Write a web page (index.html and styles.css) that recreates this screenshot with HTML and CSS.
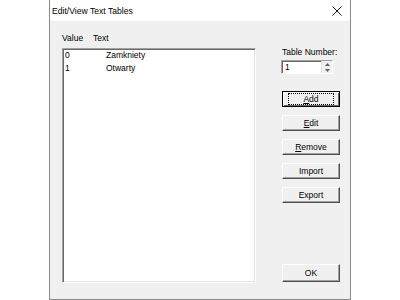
FILE: index.html
```html
<!DOCTYPE html>
<html>
<head>
    <title>Edit/View Text Tables</title>
    <link rel="stylesheet" href="styles.css">
</head>
<body>
    <div class="dialog">
        <div class="titlebar">
            <span class="title">Edit/View Text Tables</span>
            <svg class="close" width="10" height="10" viewBox="0 0 10 10">
                <path d="M0.5 0.5 L9.5 9.5 M9.5 0.5 L0.5 9.5" stroke="#1a1a1a" stroke-width="1" fill="none"/>
            </svg>
        </div>

        <div class="content">
            <div class="list-column">
                <div class="list-header">
                    <span class="col-value">Value</span>
                    <span class="col-text">Text</span>
                </div>
                <div class="listbox">
                    <div class="row"><span class="cell-value">0</span><span class="cell-text">Zamkniety</span></div>
                    <div class="row"><span class="cell-value">1</span><span class="cell-text">Otwarty</span></div>
                </div>
            </div>

            <div class="side-column">
                <label class="side-label">Table Number:</label>
                <div class="spinbox">
                    <span class="spin-value">1</span>
                    <div class="spin-arrows">
                        <svg width="5" height="3" viewBox="0 0 5 3"><path d="M0 3 L2.5 0 L5 3 Z" fill="#606060"/></svg>
                        <svg width="5" height="3" viewBox="0 0 5 3"><path d="M0 0 L2.5 3 L5 0 Z" fill="#606060"/></svg>
                    </div>
                </div>

                <button class="btn btn-default first"><span class="focus"><u>A</u>dd</span></button>
                <button class="btn"><u>E</u>dit</button>
                <button class="btn"><u>R</u>emove</button>
                <button class="btn">Import</button>
                <button class="btn">Export</button>

                <button class="btn btn-ok">OK</button>
            </div>
        </div>
    </div>
</body>
</html>
```

FILE: styles.css
```css
body {
    margin: 0;
    padding: 0;
    background-color: #fff;
    font-family: "Liberation Sans", Arial, sans-serif;
    font-size: 8.5px;
    color: #000;
}

.dialog {
    margin-left: 49px;
    width: 300px;
    height: 299px;
    border: 1px solid #8a8a8a;
    border-top: none;
    background-color: #f0f0f0;
    display: flex;
    flex-direction: column;
}

.titlebar {
    height: 21px;
    background-color: #fff;
    display: flex;
    align-items: center;
    justify-content: space-between;
    padding: 0 8px 0 2px;
}

.title {
    font-size: 8.6px;
    color: #000;
}

.close {
    margin-top: 1px;
}

.content {
    display: flex;
    flex: 1;
    padding: 11px 0 0 12px;
}

.list-column {
    width: 194px;
}

.list-header {
    height: 13px;
    line-height: 13px;
    margin-bottom: 3px;
    display: flex;
}

.col-value {
    width: 31px;
}

.listbox {
    height: 233px;
    background-color: #fff;
    border-top: 1px solid #a0a0a0;
    border-left: 1px solid #a0a0a0;
    border-right: 1px solid #fff;
    border-bottom: 1px solid #fff;
    box-shadow: inset 1px 1px 0 #696969, inset -1px -1px 0 #e3e3e3;
    padding: 0 0 0 2px;
}

.row {
    display: flex;
    height: 13px;
    line-height: 13px;
}

.cell-value {
    width: 41px;
}

.side-column {
    margin-left: 25px;
    width: 60px;
    display: flex;
    flex-direction: column;
    padding-top: 14px;
}

.side-label {
    height: 12px;
    line-height: 12px;
    padding-left: 1px;
}

.spinbox {
    margin-top: 2px;
    width: 52px;
    height: 14px;
    box-sizing: border-box;
    background-color: #fff;
    border-top: 1px solid #a0a0a0;
    border-left: 1px solid #a0a0a0;
    border-right: 1px solid #fff;
    border-bottom: 1px solid #fff;
    box-shadow: inset 1px 1px 0 #696969;
    display: flex;
    align-items: center;
    justify-content: space-between;
}

.spin-value {
    padding-left: 3px;
    line-height: 12px;
}

.spin-arrows {
    width: 10px;
    height: 12px;
    display: flex;
    flex-direction: column;
    align-items: center;
    justify-content: space-around;
    background-color: #f0f0f0;
    border-left: 1px solid #e3e3e3;
}

.btn {
    margin-left: 1px;
    margin-top: 8px;
    width: 58px;
    height: 16px;
    padding: 0;
    font-family: "Liberation Sans", Arial, sans-serif;
    font-size: 8.5px;
    color: #000;
    background-color: #f0f0f0;
    border-top: 1px solid #fff;
    border-left: 1px solid #fff;
    border-right: 1px solid #505050;
    border-bottom: 1px solid #505050;
    box-shadow: inset -1px -1px 0 #a0a0a0;
    display: flex;
    align-items: center;
    justify-content: center;
}

.btn.first {
    margin-top: 17px;
}

.btn-default {
    border: 1px solid #000;
    box-shadow: inset 1px 1px 0 #fff, inset -1px -1px 0 #696969;
}

.focus {
    border: 1px dotted #000;
    padding: 0 14px;
    line-height: 10px;
}

.btn-ok {
    margin-top: 61px;
    height: 18px;
}
```
